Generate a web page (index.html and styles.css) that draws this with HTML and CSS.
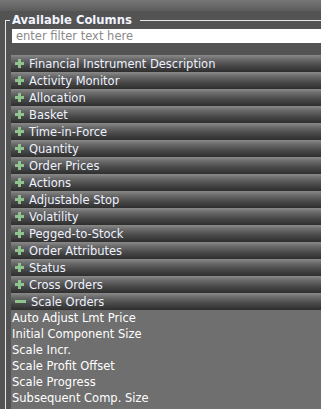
FILE: index.html
```html
<!DOCTYPE html>
<html>
<head>
  <title>Available Columns</title>
  <link rel="stylesheet" href="styles.css">
</head>
<body>
  <div class="topbar"></div>
  <div class="main">
    <fieldset class="colbox">
      <legend class="colbox-title">Available Columns</legend>
      <input type="text" class="filter-input" placeholder="enter filter text here">
      <div class="col-list">
        <div class="group"><span class="plus"></span>Financial Instrument Description</div>
        <div class="group"><span class="plus"></span>Activity Monitor</div>
        <div class="group"><span class="plus"></span>Allocation</div>
        <div class="group"><span class="plus"></span>Basket</div>
        <div class="group"><span class="plus"></span>Time-in-Force</div>
        <div class="group"><span class="plus"></span>Quantity</div>
        <div class="group"><span class="plus"></span>Order Prices</div>
        <div class="group"><span class="plus"></span>Actions</div>
        <div class="group"><span class="plus"></span>Adjustable Stop</div>
        <div class="group"><span class="plus"></span>Volatility</div>
        <div class="group"><span class="plus"></span>Pegged-to-Stock</div>
        <div class="group"><span class="plus"></span>Order Attributes</div>
        <div class="group"><span class="plus"></span>Status</div>
        <div class="group"><span class="plus"></span>Cross Orders</div>
        <div class="group open"><span class="minus"></span>Scale Orders</div>
        <div class="items">
          <div class="item">Auto Adjust Lmt Price</div>
          <div class="item">Initial Component Size</div>
          <div class="item">Scale Incr.</div>
          <div class="item">Scale Profit Offset</div>
          <div class="item">Scale Progress</div>
          <div class="item">Subsequent Comp. Size</div>
        </div>
      </div>
    </fieldset>
  </div>
</body>
</html>
```

FILE: styles.css
```css
* {
  margin: 0;
  padding: 0;
  box-sizing: border-box;
}

body {
  background: #535353;
  font-family: "DejaVu Sans", Verdana, sans-serif;
  font-size: 11.5px;
  overflow: hidden;
}

.topbar {
  height: 11px;
  background: linear-gradient(#767676, #5c5c5c);
}

.main {
  padding-left: 5px;
  padding-top: 1px;
  height: 398px;
}

.colbox {
  border: none;
  border-top: 1px solid #e6e6e6;
  border-left: 1px solid #e6e6e6;
  padding: 0 0 0 5px;
  height: 100%;
}

.colbox-title {
  margin-left: -1px;
  padding: 0 8px 0 2px;
  background: #535353;
  color: #f2f4ff;
  font-weight: bold;
  font-size: 11.6px;
  line-height: 14px;
}

.colbox-title::first-line {
  line-height: 16px;
}

.filter-input {
  display: block;
  width: calc(100% - 1px);
  margin: 1px 0 0 1px;
  height: 14px;
  border: none;
  outline: none;
  padding: 0 4px;
  font-family: inherit;
  font-size: 11.5px;
  color: #333;
  background: #fff;
}

.filter-input::placeholder {
  color: #8a8a8a;
}

.col-list {
  margin-top: 12px;
  background: #6f6f6f;
}

.group {
  display: flex;
  align-items: center;
  gap: 4px;
  height: 17px;
  padding-left: 4px;
  color: #eef2ff;
  background: linear-gradient(#8a8a8a 0%, #6a6a6a 25%, #4a4a4a 60%, #2e2e2e 100%);
}

.plus,
.minus {
  position: relative;
  width: 9px;
  height: 9px;
  margin-right: 1px;
}

.plus::before,
.plus::after,
.minus::before {
  content: "";
  position: absolute;
  background: #8fc48f;
}

.plus::before {
  left: 0;
  top: 3px;
  width: 9px;
  height: 3px;
}

.plus::after {
  left: 3px;
  top: 0;
  width: 3px;
  height: 9px;
}

.minus {
  width: 11px;
}

.minus::before {
  left: 0;
  top: 3px;
  width: 11px;
  height: 3px;
}

.items {
  padding-bottom: 4px;
  border-bottom: 1px solid #8a8a8a;
}

.item {
  height: 16px;
  line-height: 17px;
  padding-left: 1px;
  color: #fff;
}
```
